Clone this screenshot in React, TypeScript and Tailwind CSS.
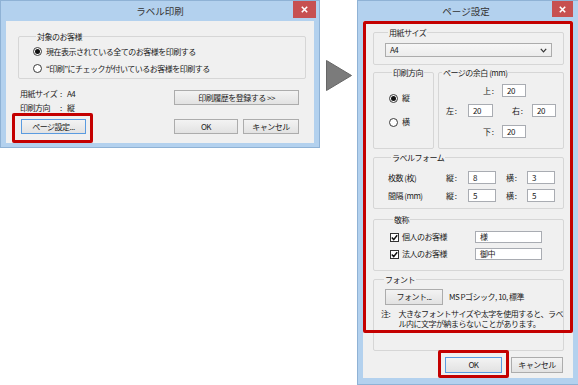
import React from "react";

function Radio({ checked }: { checked?: boolean }) {
  return (
    <span className="w-[9px] h-[9px] rounded-full border border-[#3a3a3a] bg-white flex items-center justify-center shrink-0">
      {checked && <span className="w-[5px] h-[5px] rounded-full bg-[#111]" />}
    </span>
  );
}

function Check() {
  return (
    <span className="w-[9px] h-[9px] border border-[#333] bg-white flex items-center justify-center shrink-0">
      <svg width="7" height="7" viewBox="0 0 7 7">
        <path d="M0.8 3.6 L2.7 5.6 L6.2 1.2" stroke="#111" strokeWidth="1.5" fill="none" />
      </svg>
    </span>
  );
}

function Btn({ className, children, focus }: { className: string; children: React.ReactNode; focus?: boolean }) {
  return (
    <div
      className={
        "flex items-center justify-center border bg-gradient-to-b from-[#f3f3f3] to-[#e2e2e2] whitespace-nowrap " +
        (focus ? "border-[#5a9be0] " : "border-[#acacac] ") +
        className
      }
    >
      {children}
    </div>
  );
}

function Input({ className, value }: { className: string; value: string }) {
  return (
    <div className={"bg-white border border-[#a9acb2] flex items-center pl-[4px] " + className}>{value}</div>
  );
}

function Group({ label, className, children }: { label: string; className: string; children?: React.ReactNode }) {
  return (
    <fieldset className={"border border-[#d6d6d6] rounded-[2px] min-w-0 " + className}>
      <legend className="ml-[3px] px-[1px] leading-[11px]">{label}</legend>
      {children}
    </fieldset>
  );
}

function Close({ className }: { className: string }) {
  return (
    <div className={"absolute top-0 bg-[#c75050] flex items-center justify-center " + className}>
      <svg width="7" height="7" viewBox="0 0 7 7">
        <path d="M0.8 0.8 L6.2 6.2 M6.2 0.8 L0.8 6.2" stroke="white" strokeWidth="1.6" />
      </svg>
    </div>
  );
}

export default function App() {
  return (
    <div className="w-[578px] h-[385px] bg-white flex items-start overflow-hidden font-['Noto_Sans_CJK_JP','Noto_Sans',sans-serif] text-[8px] tracking-[-0.5px] text-[#1a1a1a]">
      {/* Left window */}
      <div className="w-[320px] h-[148px] shrink-0 border border-[#8fb2d5] bg-[#b3d1ee] flex flex-col">
        <div className="h-[20px] relative flex items-center justify-center shrink-0">
          <span className="text-[9.5px] tracking-normal text-[#333]">ラベル印刷</span>
          <Close className="right-[3px] w-[23px] h-[17px]" />
        </div>
        <div className="flex-1 ml-[5px] mr-[5px] mb-[4px] bg-[#f0f0f0] pt-[10px] pl-[12px] pr-[8px] flex flex-col">
          <Group label="対象のお客様" className="pt-[1px] pb-[1px] pl-[14px]">
            <div className="h-[17px] flex items-center gap-[4px]">
              <Radio checked />
              <span>現在表示されている全てのお客様を印刷する</span>
            </div>
            <div className="h-[17px] flex items-center gap-[4px]">
              <Radio />
              <span>“印刷”にチェックが付いているお客様を印刷する</span>
            </div>
          </Group>
          <div className="mt-[8px] flex justify-between items-start pl-[2px] pr-[7px]">
            <div className="flex flex-col">
              <div className="h-[14px] flex items-center">
                <span className="w-[40px]">用紙サイズ</span>
                <span className="w-[7px]">:</span>
                <span>A4</span>
              </div>
              <div className="h-[14px] flex items-center">
                <span className="w-[40px]">印刷方向</span>
                <span className="w-[7px]">:</span>
                <span>縦</span>
              </div>
            </div>
            <Btn className="mt-[3px] w-[125px] h-[15px]">印刷履歴を登録する &gt;&gt;</Btn>
          </div>
          <div className="mt-[4px] flex justify-between items-start pl-[3px] pr-[7px]">
            <div className="relative">
              <Btn focus className="w-[65px] h-[15px]">ページ設定...</Btn>
              <div className="absolute left-[-9px] right-[-7px] top-[-6px] bottom-[-9px] border-[3px] border-[#c40000] rounded-[2px]" />
            </div>
            <div className="flex gap-[5px]">
              <Btn className="w-[64px] h-[15px]">OK</Btn>
              <Btn className="w-[56px] h-[15px]">キャンセル</Btn>
            </div>
          </div>
        </div>
      </div>

      {/* Arrow */}
      <div className="ml-[6px] mt-[60px] w-[26px] shrink-0">
        <svg width="26" height="31" viewBox="0 0 26 31">
          <polygon points="0.5,0.5 25.5,15.5 0.5,30.5" fill="#7b7b7b" stroke="#666" strokeWidth="1" />
        </svg>
      </div>

      {/* Right window */}
      <div className="ml-[5px] w-[222px] h-[385px] shrink-0 border border-[#8fb2d5] bg-[#b3d1ee] flex flex-col">
        <div className="h-[20px] relative flex items-center justify-center shrink-0">
          <span className="text-[9.5px] tracking-normal text-[#333] -ml-[4px]">ページ設定</span>
          <Close className="right-[5px] w-[21px] h-[16px]" />
        </div>
        <div className="flex-1 ml-[5px] mr-[5px] mb-[6px] bg-[#f0f0f0] relative pt-[6px] pl-[10px] pr-[9px] flex flex-col">
          <Group label="用紙サイズ" className="pt-[5px] pb-[7px] pl-[11px] pr-[11px]">
            <div className="h-[14px] border border-[#acacac] bg-gradient-to-b from-[#f7f7f7] to-[#ececec] flex items-center justify-between pl-[4px] pr-[4px]">
              <span>A4</span>
              <svg width="7" height="5" viewBox="0 0 7 5">
                <path d="M0.8 0.8 L3.5 3.8 L6.2 0.8" stroke="#333" strokeWidth="1.2" fill="none" />
              </svg>
            </div>
          </Group>

          <div className="mt-[2px] flex gap-[4px]">
            <Group label="印刷方向" className="w-[61px] h-[82px] shrink-0 pl-[15px]">
              <div className="mt-[13px] h-[14px] flex items-center gap-[4px]">
                <Radio checked />
                <span>縦</span>
              </div>
              <div className="mt-[10px] h-[14px] flex items-center gap-[4px]">
                <Radio />
                <span>横</span>
              </div>
            </Group>
            <Group label="ページの余白 (mm)" className="flex-1 h-[82px]">
              <div className="mt-[6px] h-[13px] flex items-center pl-[44px]">
                <span className="w-[19px]">上 :</span>
                <Input className="w-[24px] h-[13px]" value="20" />
              </div>
              <div className="mt-[7px] h-[13px] flex items-center pl-[7px]">
                <span className="w-[22px]">左 :</span>
                <Input className="w-[25px] h-[13px]" value="20" />
                <span className="ml-[19px] w-[20px]">右 :</span>
                <Input className="w-[24px] h-[13px]" value="20" />
              </div>
              <div className="mt-[8px] h-[13px] flex items-center pl-[44px]">
                <span className="w-[19px]">下 :</span>
                <Input className="w-[24px] h-[13px]" value="20" />
              </div>
            </Group>
          </div>

          <Group label="ラベルフォーム" className="mt-[3px] h-[57px] pl-[14px]">
            <div className="mt-[8px] h-[13px] flex items-center">
              <span className="w-[58px]">枚数 (枚)</span>
              <span className="w-[22px]">縦 :</span>
              <Input className="w-[28px] h-[13px]" value="8" />
              <span className="ml-[10px] w-[21px]">横 :</span>
              <Input className="w-[28px] h-[13px]" value="3" />
            </div>
            <div className="mt-[5px] h-[13px] flex items-center">
              <span className="w-[58px]">間隔 (mm)</span>
              <span className="w-[22px]">縦 :</span>
              <Input className="w-[28px] h-[13px]" value="5" />
              <span className="ml-[10px] w-[21px]">横 :</span>
              <Input className="w-[28px] h-[13px]" value="5" />
            </div>
          </Group>

          <Group label="敬称" className="mt-[5px] h-[57px] pl-[16px]">
            <div className="mt-[6px] h-[12px] flex items-center">
              <Check />
              <span className="ml-[3px] w-[73px]">個人のお客様</span>
              <Input className="w-[67px] h-[12px]" value="様" />
            </div>
            <div className="mt-[5px] h-[12px] flex items-center">
              <Check />
              <span className="ml-[3px] w-[73px]">法人のお客様</span>
              <Input className="w-[67px] h-[12px]" value="御中" />
            </div>
          </Group>

          <Group label="フォント" className="mt-[3px] h-[77px] pl-[7px]">
            <div className="mt-[4px] flex items-center">
              <Btn className="ml-[4px] w-[58px] h-[16px]">フォント...</Btn>
              <span className="ml-[6px]">MS Pゴシック, 10, 標準</span>
            </div>
            <div className="mt-[4px] flex leading-[9.5px]">
              <span className="w-[18px]">注:</span>
              <span className="whitespace-nowrap">
                大きなフォントサイズや太字を使用すると、ラベ
                <br />
                ル内に文字が納まらないことがあります。
              </span>
            </div>
          </Group>

          <div className="absolute left-0 top-0 right-0 h-[312px] border-[3px] border-[#c40000] rounded-[2px]" />

          <div className="mt-[6px] flex justify-end gap-[9px] pr-[1px]">
            <div className="relative">
              <Btn focus className="w-[57px] h-[16px]">OK</Btn>
              <div className="absolute left-[-7px] right-[-7px] top-[-7px] bottom-[-5px] border-[3px] border-[#c40000] rounded-[2px]" />
            </div>
            <Btn className="w-[52px] h-[16px]">キャンセル</Btn>
          </div>
        </div>
      </div>
    </div>
  );
}
